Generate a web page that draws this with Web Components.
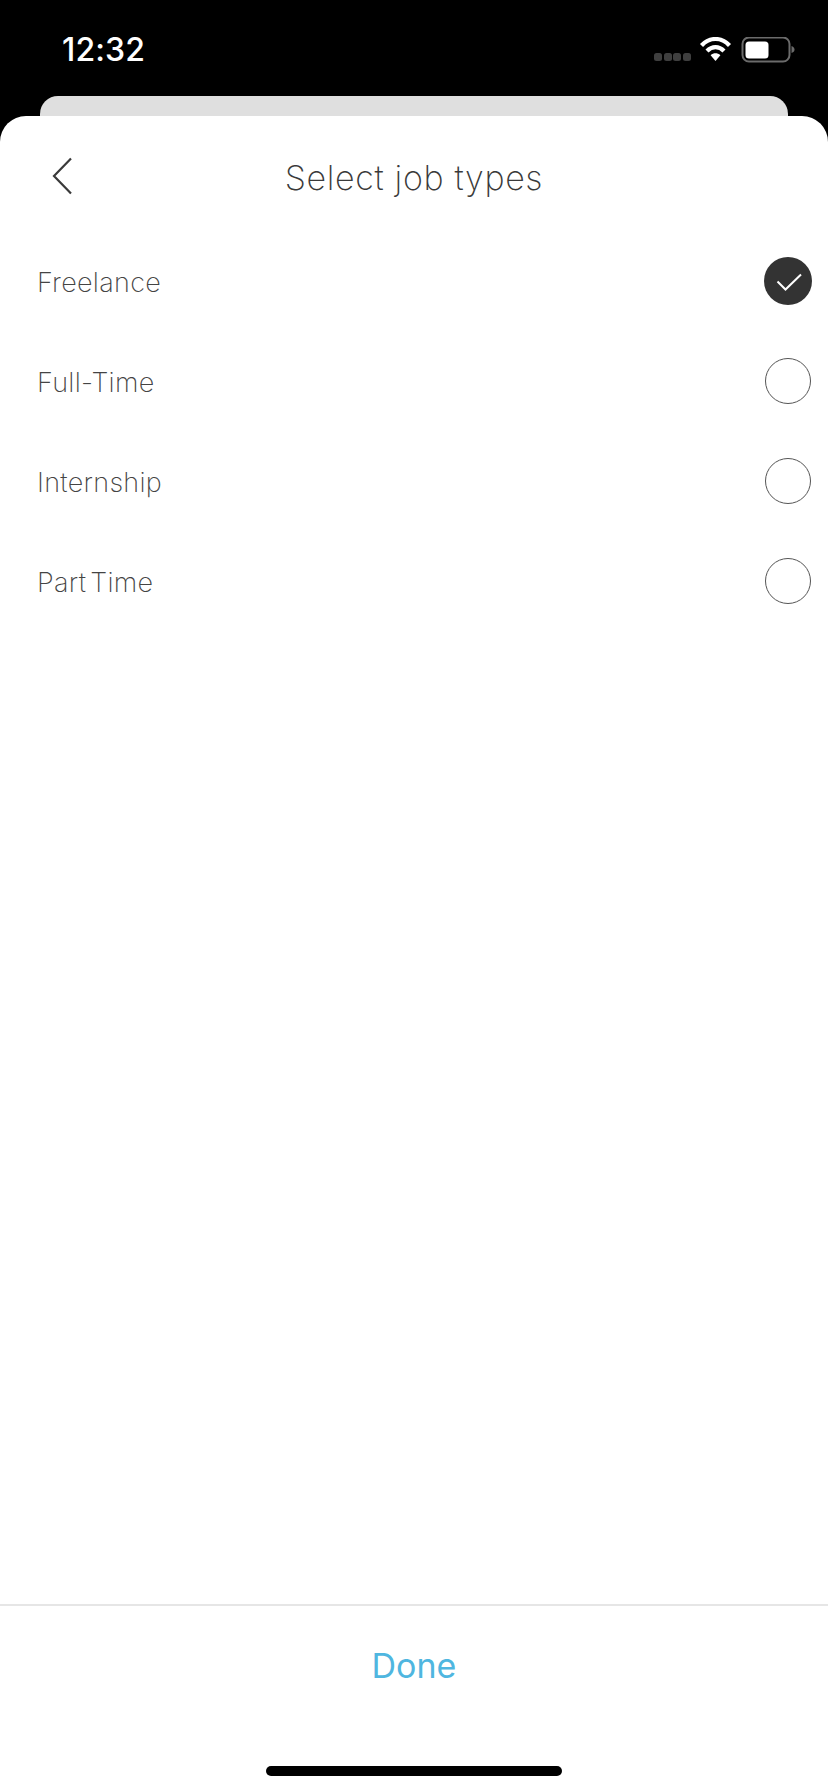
<!DOCTYPE html>
<html lang="en"><head><meta charset="utf-8"><title>Select job types</title>
<style>
html,body{margin:0;padding:0;background:#000}
body{width:828px;height:1792px;overflow:hidden;font-family:Inter,"Liberation Sans",sans-serif}
</style></head><body>
<app-screen>
  <status-bar slot="status" time="12:32"></status-bar>
  <sheet-header slot="header">Select job types</sheet-header>
  <option-row selected>Freelance</option-row>
  <option-row>Full-Time</option-row>
  <option-row>Internship</option-row>
  <option-row>Part Time</option-row>
  <done-footer slot="footer">Done</done-footer>
</app-screen>
<script>
function def(name,html,init){
  customElements.define(name,class extends HTMLElement{
    constructor(){super();this.attachShadow({mode:'open'}).innerHTML=html;}
    connectedCallback(){if(init)init(this);}
  });
}
def('app-screen',`<style>
:host{display:flex;flex-direction:column;width:828px;height:1792px;background:#000}
.peek{flex:none;height:20px;margin:0 40px;background:#dfdfdf;border-radius:18px 18px 0 0}
.sheet{flex:1;min-height:0;display:flex;flex-direction:column;background:#fff;border-radius:26px 26px 0 0}
.list{flex:1;min-height:0;display:flex;flex-direction:column;padding-top:7px}
</style>
<slot name="status"></slot>
<div class="peek"></div>
<div class="sheet">
  <slot name="header"></slot>
  <div class="list"><slot></slot></div>
  <slot name="footer"></slot>
</div>`);
def('status-bar',`<style>
:host{display:flex;align-items:flex-start;justify-content:space-between;height:96px;box-sizing:border-box;padding:31px 33px 0 62px;color:#fff}
.t{font:550 32px/38px Inter,"Liberation Sans",sans-serif;letter-spacing:.1px}
svg{display:block;margin-top:6px}
</style>
<span class="t"></span>
<svg width="141" height="26" viewBox="654 37 141 26" aria-hidden="true">
  <g fill="#3f3f3f"><rect x="654" y="53" width="8" height="8" rx="2.5"/><rect x="664" y="53" width="8" height="8" rx="2.5"/><rect x="673" y="53" width="8" height="8" rx="2.5"/><rect x="683" y="53" width="8" height="8" rx="2.5"/></g>
  <g fill="none" stroke="#fff" stroke-width="4.2">
    <path d="M701.5 45.5C709.500 36.800 721.500 36.800 729.500 45.500"/>
    <path d="M707 51C712 45.800 719 45.800 724 51"/>
  </g>
  <path d="M710.600 55.200C713.600 52.700 717.400 52.700 720.400 55.200L715.500 61Z" fill="#fff"/>
  <rect x="742.500" y="37.500" width="47" height="24" rx="6.500" fill="none" stroke="#6b6b6b" stroke-width="2"/>
  <rect x="745.500" y="41.500" width="23" height="17" rx="3.500" fill="#fff"/>
  <path d="M791.500 46C794 47 794.500 48.500 794.500 49.500C794.500 51 794 52 791.500 53Z" fill="#6b6b6b"/>
</svg>`,el=>{el.shadowRoot.querySelector('.t').textContent=el.getAttribute('time');});
def('sheet-header',`<style>
:host{display:flex;align-items:center;justify-content:center;position:relative;height:108px;padding-top:16px;box-sizing:border-box;color:#3a3a3a;font:200 34px/40px Inter,"Liberation Sans",sans-serif}
svg{position:absolute;left:51px;top:41px}
span{letter-spacing:.65px}
</style>
<svg width="24" height="38" viewBox="0 0 24 38" aria-hidden="true"><path d="M20 1.500L3 19 20 36.500" fill="none" stroke="#3a3a3a" stroke-width="2.200"/></svg>
<span><slot></slot></span>`);
def('option-row',`<style>
:host{display:flex;align-items:center;justify-content:space-between;flex:none;height:100px;box-sizing:border-box;padding:0 16px 0 37px;color:#444;font:200 27px/34px Inter,"Liberation Sans",sans-serif}
span{letter-spacing:.3px;word-spacing:-4px;padding-top:3px}
.c{width:46px;height:46px;box-sizing:border-box;border:1.500px solid #555;border-radius:50%;margin-right:1px}
:host([selected]) .c{display:none}
svg{display:none}
:host([selected]) svg{display:block}
</style>
<span><slot></slot></span>
<div class="c"></div>
<svg width="48" height="48" viewBox="0 0 48 48" aria-hidden="true"><circle cx="24" cy="24" r="24" fill="#333"/><path d="M13.500 24.500L21.500 32.500 37 17.500" fill="none" stroke="#fff" stroke-width="2"/></svg>`);
def('done-footer',`<style>
:host{display:flex;flex-direction:column;align-items:center;flex:none;height:188px;box-sizing:border-box;border-top:2px solid #e6e6e6}
.d{margin-top:40px;height:40px;color:#4fb6e0;font:400 34px/40px Inter,"Liberation Sans",sans-serif;letter-spacing:0}
.h{margin-top:80px;width:296px;height:10px;background:#000;border-radius:5px}
</style>
<div class="d"><slot></slot></div>
<div class="h"></div>`);
</script>
</body></html>
